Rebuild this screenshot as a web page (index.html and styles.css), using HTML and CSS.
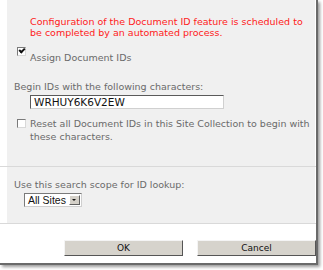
FILE: index.html
```html
<!DOCTYPE html>
<html lang="en">
<head>
    <meta charset="UTF-8">
    <title>Document ID Settings</title>
    <link rel="stylesheet" href="styles.css">
</head>
<body>

<div class="dialog">
    <div class="panel panel_top">
        <p class="notice">Configuration of the Document ID feature is scheduled to be completed by an automated process.</p>
        <div class="check_row assign">
            <span class="checkbox checked"></span>
            <span class="check_label">Assign Document IDs</span>
        </div>
        <p class="field_label">Begin IDs with the following characters:</p>
        <div class="textfield">WRHUY6K6V2EW</div>
        <div class="check_row reset">
            <span class="checkbox"></span>
            <span class="check_label">Reset all Document IDs in this Site Collection to begin with these characters.</span>
        </div>
    </div>
    <div class="rule"></div>
    <div class="panel panel_scope">
        <p class="field_label">Use this search scope for ID lookup:</p>
        <div class="select">
            <span class="select_text">All Sites</span>
            <span class="select_btn"></span>
        </div>
    </div>
    <div class="rule"></div>
    <div class="buttons">
        <div class="button">OK</div>
        <div class="button">Cancel</div>
    </div>
</div>

</body>
</html>
```

FILE: styles.css
```css
html, body{
    margin: 0;
    padding: 0;
    background: #ffffff;
}
body{
    width: 323px;
    height: 270px;
    overflow: hidden;
    font-family: "DejaVu Sans", Verdana, sans-serif;
    font-size: 9.5px;
    color: #6a6a6a;
}
p{
    margin: 0;
}
.dialog{
    box-sizing: border-box;
    width: 318px;
    height: 265px;
    background: #ffffff;
    border-right: 2px solid #6a6a6a;
    border-bottom: 2px solid #6a6a6a;
    box-shadow: 2px 2px 3px #9a9a9a;
}
.panel{
    box-sizing: border-box;
    margin-left: 7px;
    margin-right: 1px;
    background: #f0f0f0;
}
.panel_top{
    height: 166px;
    padding-top: 16px;
}
.panel_scope{
    height: 56px;
    padding-top: 12px;
}
.rule{
    height: 1px;
    background: #d9d9d9;
}
.notice{
    padding: 0 8px 0 23px;
    color: #ff2020;
    line-height: 11px;
}
.check_row{
    display: flex;
    align-items: flex-start;
    margin-left: 10px;
}
.assign{
    margin-top: 9px;
}
.assign .check_label{
    padding-top: 5px;
}
.reset{
    margin-top: 10px;
}
.reset .check_label{
    line-height: 13px;
    margin-top: -2px;
    padding-right: 1px;
}
.checkbox{
    box-sizing: border-box;
    flex: none;
    width: 9px;
    height: 9px;
    margin-right: 4px;
    background: #ffffff;
    border: 1px solid #7a7a7a;
    border-right-color: #d8d8d8;
    border-bottom-color: #d8d8d8;
    position: relative;
}
.checked::after{
    content: "";
    position: absolute;
    left: 1px;
    top: 0;
    width: 4px;
    height: 2px;
    border-left: 2px solid #111;
    border-bottom: 2px solid #111;
    transform: rotate(-45deg);
}
.field_label{
    padding-left: 7px;
    line-height: 11px;
}
.panel_top .field_label{
    margin-top: 18px;
}
.textfield{
    box-sizing: border-box;
    width: 194px;
    height: 14px;
    margin: 3px 0 0 23px;
    padding: 0 3px;
    background: #ffffff;
    border: 1px solid #d0d0d0;
    border-top-color: #5a5a5a;
    border-left-color: #5a5a5a;
    color: #111111;
    font-size: 10.5px;
    line-height: 12px;
}
.select{
    display: flex;
    align-items: center;
    box-sizing: border-box;
    width: 58px;
    height: 14px;
    margin: 3px 0 0 17px;
    padding: 0 1px 0 3px;
    background: #ffffff;
    border: 1px solid #7a7a7a;
    border-right-color: #cfcfcf;
    border-bottom-color: #cfcfcf;
}
.select_text{
    flex: 1;
    color: #111111;
    font-family: "Liberation Sans", Arial, sans-serif;
    font-size: 10.5px;
    line-height: 12px;
}
.select_btn{
    box-sizing: border-box;
    width: 11px;
    height: 10px;
    background: #d4d0c8;
    border: 1px solid #ffffff;
    border-right-color: #606060;
    border-bottom-color: #606060;
    position: relative;
}
.select_btn::after{
    content: "";
    position: absolute;
    left: 2px;
    top: 3px;
    border-left: 2px solid transparent;
    border-right: 2px solid transparent;
    border-top: 2px solid #111;
}
.buttons{
    display: flex;
    justify-content: flex-end;
    gap: 14px;
    padding-top: 16px;
}
.button{
    box-sizing: border-box;
    width: 119px;
    height: 16px;
    background: #d6d3cc;
    border: 1px solid #f4f4f4;
    border-right-color: #555555;
    border-bottom-color: #555555;
    color: #111111;
    font-family: "DejaVu Sans", Tahoma, sans-serif;
    font-size: 9px;
    line-height: 14px;
    text-align: center;
}
```
